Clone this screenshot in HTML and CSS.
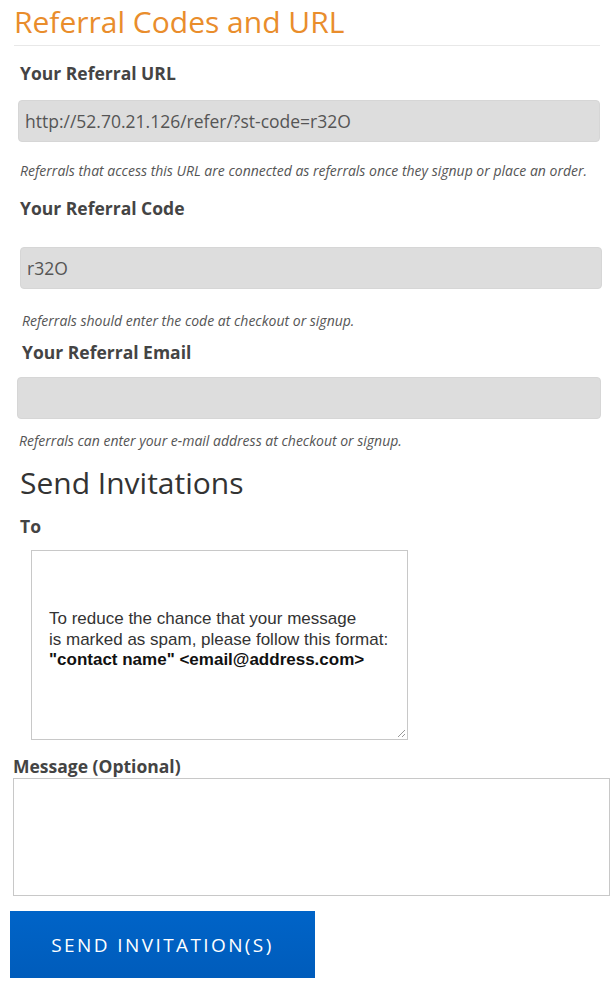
FILE: index.html
```html
<!DOCTYPE html>
<html lang="en">
<head>
  <meta charset="UTF-8" />
  <meta name="viewport" content="width=device-width, initial-scale=1.0"/>
  <title>Referral Codes and URL</title>
  <link rel="stylesheet" href="styles.css">
</head>
<body>
  <div class="page">
    <h1 class="page-title">Referral Codes and URL</h1>

    <div class="field field-url">
      <label class="field-label" for="ref-url">Your Referral URL</label>
      <input class="field-input" id="ref-url" type="text" value="http://52.70.21.126/refer/?st-code=r32O" readonly />
      <p class="field-help">Referrals that access this URL are connected as referrals once they signup or place an order.</p>
    </div>

    <div class="field field-code">
      <label class="field-label" for="ref-code">Your Referral Code</label>
      <input class="field-input" id="ref-code" type="text" value="r32O" readonly />
      <p class="field-help">Referrals should enter the code at checkout or signup.</p>
    </div>

    <div class="field field-email">
      <label class="field-label" for="ref-email">Your Referral Email</label>
      <input class="field-input" id="ref-email" type="text" value="" readonly />
      <p class="field-help">Referrals can enter your e-mail address at checkout or signup.</p>
    </div>

    <h2 class="section-title">Send Invitations</h2>

    <div class="field field-to">
      <label class="field-label">To</label>
      <div class="to-box">
        <p class="to-hint">
          To reduce the chance that your message<br>
          is marked as spam, please follow this format:<br>
          <strong>"contact name" &lt;email@address.com&gt;</strong>
        </p>
        <svg class="grip" width="9" height="9" viewBox="0 0 9 9">
          <line x1="8" y1="1" x2="1" y2="8" stroke="#999" />
          <line x1="8" y1="5" x2="5" y2="8" stroke="#999" />
        </svg>
      </div>
    </div>

    <div class="field field-message">
      <label class="field-label" for="message">Message (Optional)</label>
      <textarea class="message-box" id="message"></textarea>
    </div>

    <button class="send-button">Send Invitation(s)</button>
  </div>
</body>
</html>
```

FILE: styles.css
```css
body {
  margin: 0;
  background: #fff;
  color: #444;
  font-family: 'Open Sans', 'Noto Sans', sans-serif;
}
.page {
  width: 614px;
}
.page-title {
  margin: 0 14px 0 14px;
  padding: 3px 0 4px 0;
  font-size: 30px;
  line-height: 38px;
  font-weight: 400;
  color: #e98d2c;
  border-bottom: 1px solid #e8e8e8;
}
.field {
  display: flex;
  flex-direction: column;
  align-items: flex-start;
}
.field-label {
  font-size: 17.5px;
  line-height: 22px;
  font-weight: 700;
  color: #444;
}
.field-input {
  box-sizing: border-box;
  height: 42px;
  padding: 0 6px;
  border: 1px solid #d6d6d6;
  border-radius: 4px;
  background: #dddddd;
  font-family: 'Open Sans', 'Noto Sans', sans-serif;
  font-size: 17.5px;
  color: #555;
  outline: none;
}
.field-help {
  margin: 0;
  font-size: 14px;
  line-height: 18px;
  font-style: italic;
  color: #555;
}

/* url */
.field-url { margin: 16px 0 0 20px; }
.field-url .field-input { margin: 16px 0 0 -2px; width: 582px; }
.field-url .field-help { margin-top: 20px; }

/* code */
.field-code { margin: 17px 0 0 20px; }
.field-code .field-input { margin-top: 28px; width: 582px; }
.field-code .field-help { margin: 23px 0 0 2px; }

/* email */
.field-email { margin: 11px 0 0 22px; }
.field-email .field-input { margin: 14px 0 0 -5px; width: 584px; }
.field-email .field-help { margin: 13px 0 0 -3px; }

.section-title {
  margin: 14px 0 0 20px;
  font-size: 30px;
  line-height: 38px;
  font-weight: 400;
  color: #333;
}

/* to */
.field-to { margin: 13px 0 0 20px; }
.to-box {
  position: relative;
  box-sizing: border-box;
  width: 377px;
  height: 190px;
  margin: 13px 0 0 11px;
  padding: 0 0 10px 17px;
  border: 1px solid #c8c8c8;
  display: flex;
  align-items: center;
}
.to-hint {
  margin: 0;
  font-family: 'Liberation Sans', Arial, sans-serif;
  font-size: 17px;
  line-height: 20.5px;
  color: #333;
}
.to-hint strong {
  color: #111;
}
.grip {
  position: absolute;
  right: 1px;
  bottom: 1px;
}

/* message */
.field-message { margin: 15px 0 0 13px; }
.message-box {
  box-sizing: border-box;
  width: 597px;
  height: 118px;
  margin-top: 1px;
  border: 1px solid #c8c8c8;
  resize: none;
  font-family: 'Open Sans', 'Noto Sans', sans-serif;
}

.send-button {
  display: block;
  width: 305px;
  height: 67px;
  margin: 15px 0 0 10px;
  border: none;
  background: linear-gradient(#0064c8, #005cbb);
  color: #fff;
  font-family: 'Open Sans', 'Noto Sans', sans-serif;
  font-size: 19px;
  letter-spacing: 2.4px;
  text-transform: uppercase;
  cursor: pointer;
}
```
